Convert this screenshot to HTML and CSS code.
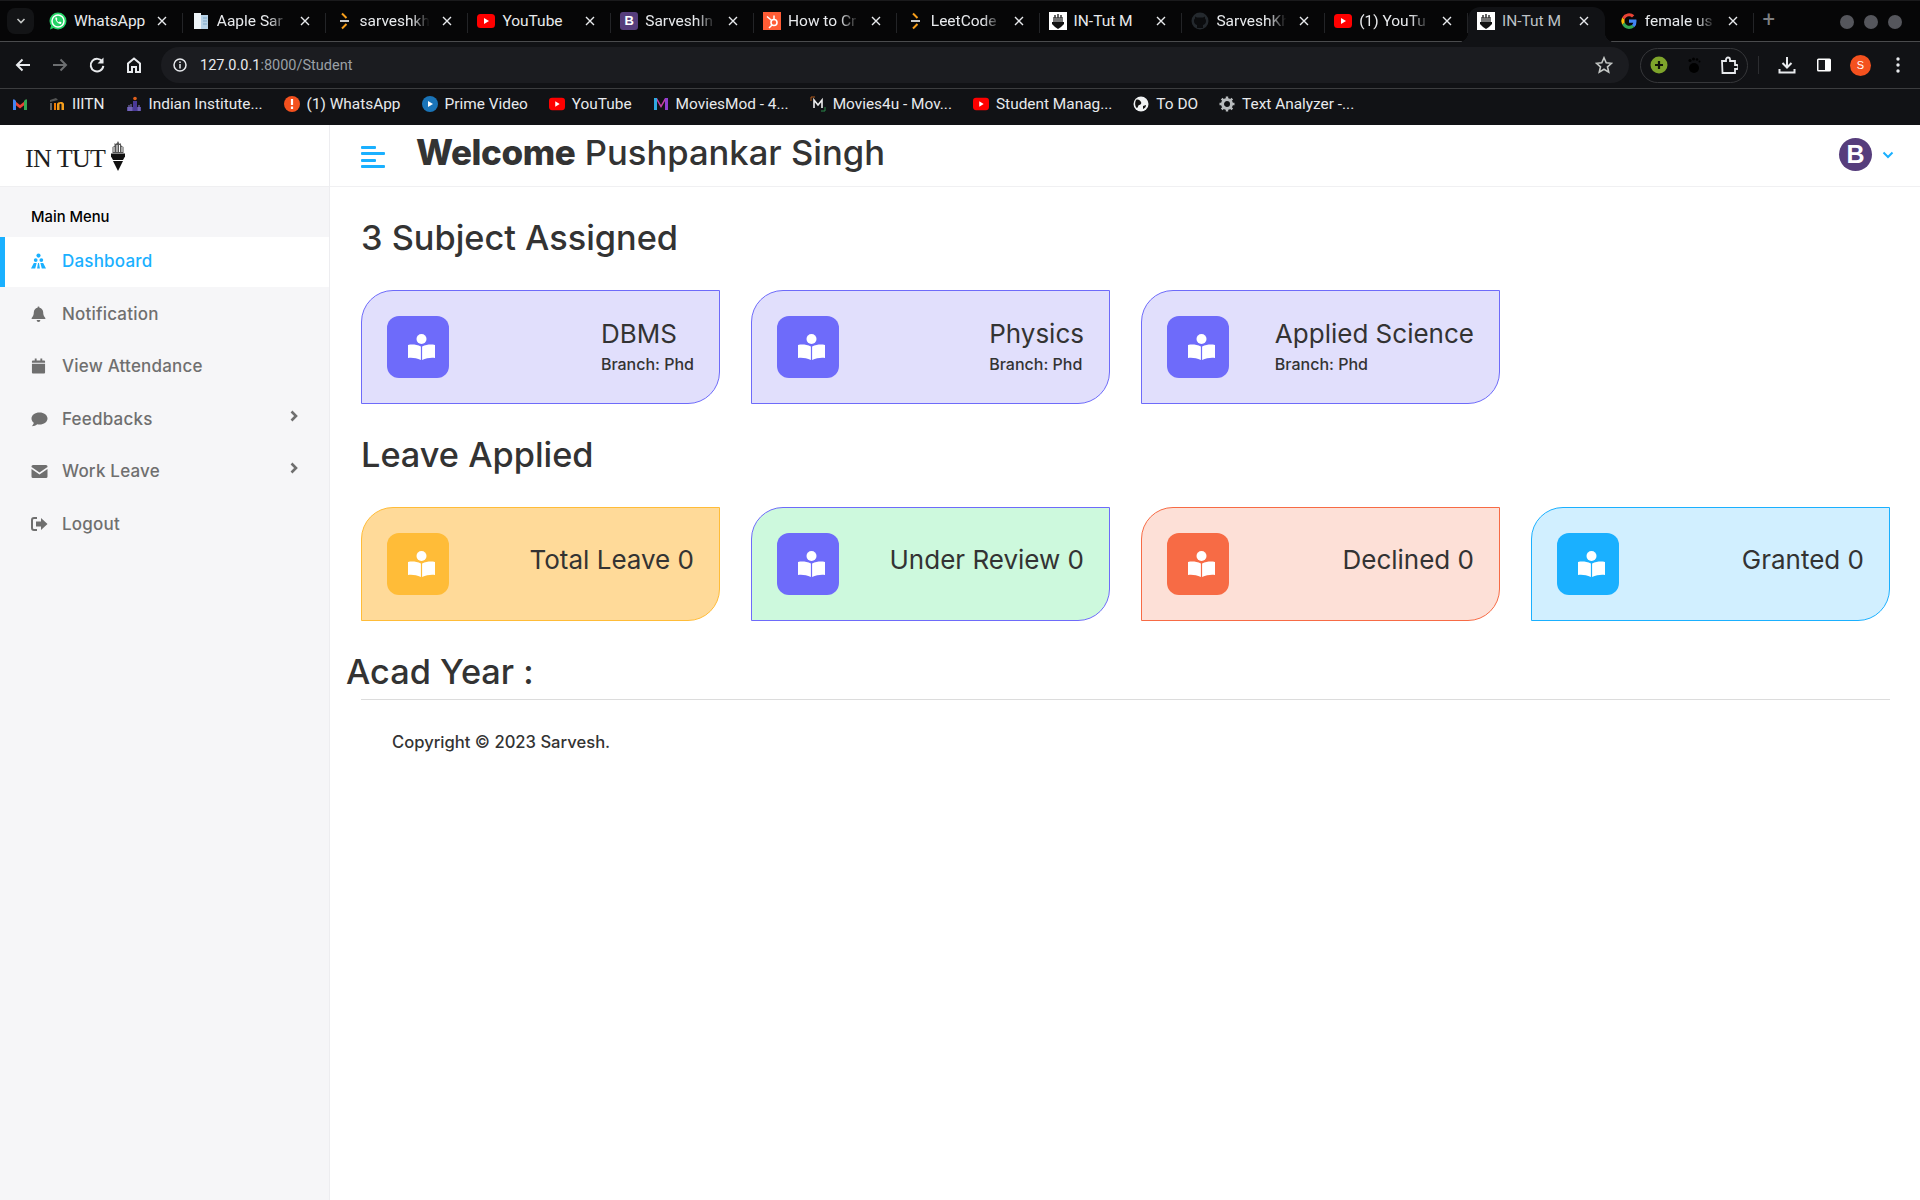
FILE: index.html
```html
<!DOCTYPE html>
<html lang="en">
<head>
<meta charset="utf-8">
<title>IN-Tut</title>
<link rel="stylesheet" href="styles.css">
</head>
<body>
<svg class="defs" width="0" height="0" aria-hidden="true">
  <symbol id="yt" viewBox="0 0 18 14"><rect width="18" height="14" rx="3.5" fill="#f00"/><path d="M7 4v6l5-3z" fill="#fff"/></symbol>
  <symbol id="lc" viewBox="0 0 18 18"><path d="M7 1.500 11.500 6M11.500 12 7 16.500" stroke="#f89f1b" stroke-width="2" fill="none"/><path d="M5 9h9" stroke="#c9c9c9" stroke-width="2"/></symbol>
  <symbol id="tut" viewBox="0 0 18 18"><rect width="18" height="18" fill="#fff"/><path d="M4 5h10v5H4z" fill="#777"/><path d="M3 10h12v2l-3 3-3 2-3-2-3-3z" fill="#111"/><path d="M6 3v3M9 2v4M12 3v3" stroke="#333" stroke-width="1.500"/></symbol>
  <symbol id="book" viewBox="0 0 27 26"><circle cx="13.500" cy="5" r="5" fill="#fff"/><path d="M0 11c4-1 8.500-.5 12.900 1.500V26C8.500 24 4 23.500 0 24z" fill="#fff"/><path d="M27 11c-4-1-8.500-.5-12.900 1.500V26c4.400-2 8.900-2.500 12.900-2z" fill="#fff"/></symbol>
  <symbol id="chev" viewBox="0 0 8 12"><path d="M1.500 1.500 6 6l-4.500 4.500" fill="none" stroke="currentColor" stroke-width="2.600"/></symbol>
  <symbol id="close" viewBox="0 0 10 10"><path d="M1 1l8 8M9 1 1 9" stroke="currentColor" stroke-width="1.400"/></symbol>
</svg>

<header class="browser">
  <div class="tabstrip">
    <button class="tab-search"><svg class="ic10" viewBox="0 0 10 10"><path d="M1.500 3 5 6.500 8.500 3" fill="none" stroke="#c4c7c5" stroke-width="1.600"/></svg></button>
    <div class="tabs">
      <div class="tab"><svg class="fav" viewBox="0 0 18 18"><circle cx="9" cy="9" r="8.500" fill="#25d366"/><path d="M1 17.500 2.500 12l3.500 3.500z" fill="#25d366"/><circle cx="9" cy="9" r="6" fill="none" stroke="#fff" stroke-width="1.500"/><path d="M6.500 5.500c-1 2 2.500 7 5.500 6.500l.5-1.800-1.800-.7-.8.800c-1-.4-1.800-1.300-2.200-2.300l.7-.8-.6-1.800z" fill="#fff"/></svg><span class="tab-title plain">WhatsApp</span><svg class="x"><use href="#close"/></svg></div>
      <div class="tab"><svg class="fav" viewBox="0 0 18 18"><path d="M2 1h7v16H2z" fill="#eef4f8"/><path d="M9 3h7v14H9z" fill="#b8d3e8"/><path d="M11 6h4M11 9h4M11 12h4" stroke="#7fa9c9"/></svg><span class="tab-title">Aaple Sar</span><svg class="x"><use href="#close"/></svg></div>
      <div class="tab"><svg class="fav"><use href="#lc"/></svg><span class="tab-title">sarveshkh</span><svg class="x"><use href="#close"/></svg></div>
      <div class="tab"><svg class="fav"><use href="#yt"/></svg><span class="tab-title plain">YouTube</span><svg class="x"><use href="#close"/></svg></div>
      <div class="tab"><span class="fav fav-b">B</span><span class="tab-title">SarveshIn</span><svg class="x"><use href="#close"/></svg></div>
      <div class="tab"><svg class="fav" viewBox="0 0 18 18"><rect width="18" height="18" fill="#ff5c35"/><circle cx="11" cy="10.500" r="3" fill="none" stroke="#fff" stroke-width="1.600"/><path d="M11 7V3.500M8.700 8.500 4 4.500M9 13l-3 3" stroke="#fff" stroke-width="1.500"/></svg><span class="tab-title">How to Cr</span><svg class="x"><use href="#close"/></svg></div>
      <div class="tab"><svg class="fav"><use href="#lc"/></svg><span class="tab-title">LeetCode</span><svg class="x"><use href="#close"/></svg></div>
      <div class="tab"><svg class="fav"><use href="#tut"/></svg><span class="tab-title plain">IN-Tut M</span><svg class="x"><use href="#close"/></svg></div>
      <div class="tab"><svg class="fav" viewBox="0 0 18 18"><circle cx="9" cy="9" r="8.500" fill="#24292e"/><path d="M6 16v-3c-2-.5-3-2-3-4 0-1 .4-2 1-2.500V4.500l2 1h6l2-1v2c.6.500 1 1.500 1 2.500 0 2-1 3.500-3 4v3z" fill="#0b0c0e"/></svg><span class="tab-title">SarveshKh</span><svg class="x"><use href="#close"/></svg></div>
      <div class="tab"><svg class="fav"><use href="#yt"/></svg><span class="tab-title">(1) YouTu</span><svg class="x"><use href="#close"/></svg></div>
      <div class="tab tab-active"><svg class="fav"><use href="#tut"/></svg><span class="tab-title plain">IN-Tut M</span><svg class="x"><use href="#close"/></svg></div>
      <div class="tab"><svg class="fav" viewBox="0 0 18 18"><path d="M16.500 9.200c0-.6 0-1.100-.2-1.700H9v3.300h4.300a3.700 3.700 0 0 1-1.600 2.400l2.500 2a7.600 7.600 0 0 0 2.300-6z" fill="#4285f4"/><path d="M9 17c2.100 0 3.900-.7 5.200-1.900l-2.500-2a4.700 4.700 0 0 1-7-2.500l-2.600 2A8 8 0 0 0 9 17z" fill="#34a853"/><path d="M4.700 10.600a4.800 4.800 0 0 1 0-3.100l-2.600-2a8 8 0 0 0 0 7.100z" fill="#fbbc05"/><path d="M9 4.200c1.200 0 2.200.4 3 1.200l2.300-2.200A8 8 0 0 0 2.100 5.500l2.600 2A4.800 4.800 0 0 1 9 4.200z" fill="#ea4335"/></svg><span class="tab-title">female us</span><svg class="x"><use href="#close"/></svg></div>
    </div>
    <span class="tab-plus">+</span>
    <div class="win-dots"><i></i><i></i><i></i></div>
  </div>

  <div class="toolbar">
    <button class="tb"><svg class="ic18" viewBox="0 0 18 18"><path d="M16 9H3M8.500 3.500 3 9l5.500 5.500" fill="none" stroke="#e8eaed" stroke-width="2"/></svg></button>
    <button class="tb"><svg class="ic18" viewBox="0 0 18 18"><path d="M2 9h13M9.500 3.500 15 9l-5.500 5.500" fill="none" stroke="#6c6e70" stroke-width="2"/></svg></button>
    <button class="tb"><svg class="ic18" viewBox="0 0 18 18"><path d="M14.500 6A6.300 6.300 0 1 0 15.300 9.800" fill="none" stroke="#e8eaed" stroke-width="2"/><path d="M15.500 1.500v6h-6z" fill="#e8eaed"/></svg></button>
    <button class="tb"><svg class="ic18" viewBox="0 0 18 18"><path d="M3 16V7.500L9 2.500l6 5V16h-4v-5H7v5z" fill="none" stroke="#e8eaed" stroke-width="2"/></svg></button>
    <div class="omnibox">
      <span class="omni-info"><svg class="ic14" viewBox="0 0 14 14"><circle cx="7" cy="7" r="6" fill="none" stroke="#e8eaed" stroke-width="1.500"/><path d="M7 6v4.500M7 3.500v1.500" stroke="#e8eaed" stroke-width="1.500"/></svg></span>
      <span class="url"><b>127.0.0.1</b>:8000/Student</span>
      <svg class="star" viewBox="0 0 18 18"><path d="M9 1.800 11.200 6.800l5.300.5-4 3.500 1.200 5.300L9 13.300l-4.700 2.800 1.200-5.300-4-3.500 5.300-.5z" fill="none" stroke="#c4c7c5" stroke-width="1.600"/></svg>
    </div>
    <div class="ext-pill">
      <span class="tb-s"><svg class="ic18" viewBox="0 0 18 18"><circle cx="9" cy="9" r="8.500" fill="#7ea42b"/><path d="M9 5v8M5 9h8" stroke="#10120a" stroke-width="2.200"/></svg></span>
      <span class="tb-s"><svg class="ic18" viewBox="0 0 18 18"><ellipse cx="9" cy="12" rx="5" ry="5" fill="#000"/><circle cx="5" cy="4.500" r="1.600" fill="#000"/><circle cx="8.500" cy="3" r="1.500" fill="#000"/><circle cx="12" cy="3.500" r="1.300" fill="#000"/><circle cx="14.500" cy="5.500" r="1" fill="#000"/></svg></span>
      <span class="tb-s"><svg class="ic18" viewBox="0 0 18 18"><path d="M2 5h4V3.500a2 2 0 0 1 4 0V5h5v4h1.500a2 2 0 0 1 0 4H15v4H2.500z" fill="none" stroke="#e8eaed" stroke-width="1.800"/></svg></span>
    </div>
    <span class="tb-divider"></span>
    <button class="tb"><svg class="ic18" viewBox="0 0 18 18"><path d="M9 1v10M4.500 7 9 11.500 13.500 7M1.500 13v3.500h15V13" fill="none" stroke="#e8eaed" stroke-width="2"/></svg></button>
    <button class="tb"><svg class="ic18" viewBox="0 0 18 18"><rect x="2" y="2.500" width="14" height="13" rx="1.500" fill="#fff"/><rect x="3.500" y="4" width="6.500" height="10" fill="#16171a"/></svg></button>
    <button class="tb"><span class="profile">S</span></button>
    <button class="tb"><svg class="ic18" viewBox="0 0 18 18"><circle cx="9" cy="3" r="1.700" fill="#e8eaed"/><circle cx="9" cy="9" r="1.700" fill="#e8eaed"/><circle cx="9" cy="15" r="1.700" fill="#e8eaed"/></svg></button>
  </div>

  <nav class="bookmarks">
    <a class="bm"><svg class="bm-ic" viewBox="0 0 16 16"><path d="M1 3.500 8 9l7-5.500V7L8 12.500 1 7z" fill="#ea4335"/><path d="M1 3.500h1.500L4 5v9H1z" fill="#4285f4"/><path d="M15 3.500h-1.500L12 5v9h3z" fill="#34a853"/></svg></a>
    <a class="bm"><svg class="bm-ic" viewBox="0 0 16 16"><path d="M1 4l6-2 2 2-8 2z" fill="#555"/><path d="M1 7h2v7H1z" fill="#666"/><path d="M5 7h2v7H5z" fill="#f57c00"/><path d="M8 14V8c0-2.500 7-3 7 0v6h-2.500V8.500c0-1-2-1-2 0V14z" fill="#f59e1c"/></svg>IIITN</a>
    <a class="bm"><svg class="bm-ic" viewBox="0 0 16 16"><circle cx="9" cy="2.500" r="1.800" fill="#e0601c"/><path d="M1 15v-4h14v4z" fill="#5b4ea0"/><path d="M7 5h4v10H7z" fill="#4a3a98"/><path d="M3 9v6M5 8v7M13 9v6" stroke="#8a7ad0"/></svg>Indian Institute...</a>
    <a class="bm"><svg class="bm-ic" viewBox="0 0 16 16"><circle cx="8" cy="8" r="8" fill="#f4511e"/><path d="M8 3v6M8 10.500V13" stroke="#fff" stroke-width="2.200"/></svg>(1) WhatsApp</a>
    <a class="bm"><svg class="bm-ic" viewBox="0 0 16 16"><circle cx="8" cy="8" r="8" fill="#1a74b8"/><path d="M6 5v6l5-3z" fill="#fff"/></svg>Prime Video</a>
    <a class="bm"><svg class="bm-ic"><use href="#yt"/></svg>YouTube</a>
    <a class="bm"><svg class="bm-ic" viewBox="0 0 16 16"><path d="M1 14V2h3v12z" fill="#2fa8e0"/><path d="M4 2l4 7 4-7v3l-4 7-4-7z" fill="#c53ea8"/><path d="M12 14V2h3v12z" fill="#8f3fd0"/></svg>MoviesMod - 4...</a>
    <a class="bm"><svg class="bm-ic" viewBox="0 0 16 16"><path d="M1 5V1h4" stroke="#b25a1c" fill="none"/><path d="M15 11v4h-4" stroke="#2a8a4a" fill="none"/><path d="M4 12V4l4 5 4-5v8" stroke="#eee" stroke-width="1.600" fill="none"/></svg>Movies4u - Mov...</a>
    <a class="bm"><svg class="bm-ic"><use href="#yt"/></svg>Student Manag...</a>
    <a class="bm"><svg class="bm-ic" viewBox="0 0 16 16"><circle cx="8" cy="8" r="7.500" fill="#f1f3f4"/><path d="M3 4c2-1 4 0 5 2s-1 3-2 3-1 3-2 3-3-4-1-8zM10 10l3-1c0 2-1 3-3 4z" fill="#111"/></svg>To DO</a>
    <a class="bm"><svg class="bm-ic" viewBox="0 0 16 16"><circle cx="8" cy="8" r="4.500" fill="none" stroke="#b9bcbe" stroke-width="3"/><path d="M8 .5v3M8 12.500v3M.5 8h3M12.500 8h3M2.700 2.700l2 2M11.300 11.300l2 2M13.300 2.700l-2 2M4.700 11.300l-2 2" stroke="#b9bcbe" stroke-width="2.400"/></svg>Text Analyzer -...</a>
  </nav>
</header>

<div class="app">
  <aside class="sidebar">
    <div class="brand">
      <span class="brand-text">IN TUT</span>
      <svg class="brand-mark" viewBox="0 0 16 32"><path d="M2.500 13V7l2-1V3l1 1 1-1v1l1.500-3 1.500 3 1-1 1 3 2 1v6z" fill="#555"/><path d="M4 7v5M7 5v7M9.500 5v7M12 7v5" stroke="#fff"/><path d="M1 13.500h14v3L13 20H3l-2-3.500z" fill="#111"/><path d="M3 21h10l-5 10z" fill="#111"/></svg>
    </div>
    <div class="menu-title">Main Menu</div>
    <a class="nav-item nav-active"><svg class="nav-ic" viewBox="0 0 16 16"><circle cx="8" cy="2.200" r="2.200"/><circle cx="5" cy="7" r="2"/><circle cx="11" cy="7" r="2"/><path d="M0 16l3-6h3L4.500 16zM16 16l-3-6h-3l1.500 6zM6.500 16l1-6h1l1 6z"/></svg>Dashboard</a>
    <a class="nav-item"><svg class="nav-ic" viewBox="0 0 16 16"><path d="M8 0a1 1 0 0 1 1 1.200c2.500.5 4 2.500 4 5 0 3 .8 4.500 2.300 6v1H.7v-1C2.200 10.700 3 9.200 3 6.200c0-2.500 1.500-4.500 4-5A1 1 0 0 1 8 0zM6 14.500h4a2 2 0 0 1-4 0z"/></svg>Notification</a>
    <a class="nav-item"><svg class="nav-ic" viewBox="0 0 16 16"><path d="M1 5.500h14V15a1 1 0 0 1-1 1H2a1 1 0 0 1-1-1zM2 2h2V0h2v2h4V0h2v2h2a1 1 0 0 1 1 1v1.500H1V3a1 1 0 0 1 1-1z"/></svg>View Attendance</a>
    <a class="nav-item has-sub"><svg class="nav-ic wide" viewBox="0 0 17 16"><path d="M8.500 1.500c4.500 0 8 2.600 8 6s-3.500 6-8 6c-.8 0-1.500-.1-2.200-.2C5 14.500 3 15.300.8 15.300c1-1 1.800-2.300 2-3.500C1.300 10.700.5 9.200.5 7.500c0-3.400 3.500-6 8-6z"/></svg><span class="nav-label">Feedbacks</span><svg class="nav-chev"><use href="#chev"/></svg></a>
    <a class="nav-item has-sub"><svg class="nav-ic wide" viewBox="0 0 17 16"><path d="M.5 3.500A1.500 1.500 0 0 1 2 2h13a1.500 1.500 0 0 1 1.500 1.500v.6L8.500 9.500.5 4.100zM.5 6l8 5.400L16.500 6v7.500A1.500 1.500 0 0 1 15 15H2a1.500 1.500 0 0 1-1.500-1.500z"/></svg><span class="nav-label">Work Leave</span><svg class="nav-chev"><use href="#chev"/></svg></a>
    <a class="nav-item"><svg class="nav-ic wide" viewBox="0 0 17 16"><path d="M6 2H3a2 2 0 0 0-2 2v8a2 2 0 0 0 2 2h3" fill="none" stroke="currentColor" stroke-width="2"/><path d="M10 2l6.500 6L10 14v-3.500H5v-5h5z"/></svg>Logout</a>
  </aside>

  <div class="main">
    <div class="topbar">
      <div class="burger"><i class="short"></i><i></i><i class="short"></i><i></i></div>
      <h1 class="welcome"><strong>Welcome</strong> <span class="welcome-name">Pushpankar Singh</span></h1>
      <div class="user"><span class="avatar">B</span><svg class="user-chev" viewBox="0 0 12 8"><path d="M1.500 1.500 6 6l4.500-4.500" fill="none" stroke="#1ab0ff" stroke-width="2"/></svg></div>
    </div>
    <div class="content">
      <h2 class="section-title">3 Subject Assigned</h2>
      <div class="card-row">
        <div class="card violet"><span class="card-icon"><svg class="book"><use href="#book"/></svg></span><div class="card-text"><div class="card-name">DBMS</div><div class="card-sub">Branch: Phd</div></div></div>
        <div class="card violet"><span class="card-icon"><svg class="book"><use href="#book"/></svg></span><div class="card-text"><div class="card-name">Physics</div><div class="card-sub">Branch: Phd</div></div></div>
        <div class="card violet"><span class="card-icon"><svg class="book"><use href="#book"/></svg></span><div class="card-text"><div class="card-name">Applied Science</div><div class="card-sub">Branch: Phd</div></div></div>
      </div>
      <h2 class="section-title">Leave Applied</h2>
      <div class="card-row">
        <div class="card amber"><span class="card-icon"><svg class="book"><use href="#book"/></svg></span><div class="card-text"><div class="card-name solo">Total Leave 0</div></div></div>
        <div class="card mint"><span class="card-icon"><svg class="book"><use href="#book"/></svg></span><div class="card-text"><div class="card-name solo">Under Review 0</div></div></div>
        <div class="card coral"><span class="card-icon"><svg class="book"><use href="#book"/></svg></span><div class="card-text"><div class="card-name solo">Declined 0</div></div></div>
        <div class="card sky"><span class="card-icon"><svg class="book"><use href="#book"/></svg></span><div class="card-text"><div class="card-name solo">Granted 0</div></div></div>
      </div>
      <h2 class="section-title acad">Acad Year :</h2>
      <hr class="rule">
      <p class="copyright">Copyright © 2023 Sarvesh.</p>
    </div>
  </div>
</div>
</body>
</html>
```

FILE: styles.css
```css
* { box-sizing: border-box; }
html, body { height: 100%; }
body {
  margin: 0;
  height: 1200px;
  overflow: hidden;
  display: flex;
  flex-direction: column;
  background: #fff;
  font-family: Inter, "Open Sans", sans-serif;
  color: #333;
}
.defs { position: absolute; }
button { border: 0; background: none; padding: 0; }

/* browser chrome */
.browser { flex: 0 0 125px; background: #111215; font-family: Roboto, sans-serif; color: #e8eaed; }
.tabstrip { height: 42px; display: flex; background: #060607; border-top: 1px solid #1a1a1c; border-bottom: 1px solid #4a4b4d; position: relative; }
.tab-search { width: 27px; height: 26px; margin: 7px 0 0 7px; border-radius: 8px; background: #131416; display: flex; align-items: center; justify-content: center; flex: none; }
.ic10 { width: 10px; height: 10px; }
.tabs { display: flex; margin-left: 6px; height: 34px; margin-top: 6px; flex: none; }
.tab { width: 142.800px; height: 35px; padding: 0 16px 7px 9px; display: flex; align-items: center; gap: 7px; font-size: 15.500px; position: relative; flex: none; }
.tab::after { content: ""; position: absolute; right: 0; top: 6px; height: 20px; width: 1px; background: #232427; }
.tab-active { background: #111215; border-radius: 12px 12px 0 0; z-index: 1; color: #bdc1c6; width: 137px; margin-right: 5.800px; }
.tab-active::before, .tab-active::after { content: ""; position: absolute; bottom: 0; top: auto; width: 10px; height: 10px; }
.tab-active::before { left: -10px; background: radial-gradient(circle at 0 0, transparent 10px, #111215 10.500px); }
.tab-active::after { right: -10px; background: radial-gradient(circle at 100% 0, transparent 10px, #111215 10.500px); }
.fav { width: 18px; height: 18px; flex: none; }
.fav-b { background: #563d7c; color: #fff; border-radius: 3px; font: 700 13px/18px "Liberation Sans", sans-serif; text-align: center; }
.tab-title { flex: 1; min-width: 0; margin-right: 4px; white-space: nowrap; -webkit-mask-image: linear-gradient(90deg, #000 72%, transparent 98%); mask-image: linear-gradient(90deg, #000 72%, transparent 98%); }
.tab-title.plain { -webkit-mask-image: none; mask-image: none; }
.x { width: 10px; height: 10px; flex: none; color: #e8eaed; }
.tab-plus { margin: 4px 0 0 9px; font-size: 22px; line-height: 30px; color: #7d7f82; flex: none; }
.win-dots { margin-left: auto; padding: 14px 18px 0 0; display: flex; gap: 10px; flex: none; }
.win-dots i { width: 14px; height: 14px; border-radius: 50%; background: #55565c; }

.toolbar { height: 47px; display: flex; align-items: center; padding: 0 4px; border-bottom: 1px solid #3c3d3f; background: #111215; }
.tb { width: 37px; height: 36px; display: flex; align-items: center; justify-content: center; flex: none; }
.ic18 { width: 18px; height: 18px; }
.ic14 { width: 14px; height: 14px; }
.omnibox { flex: 1; height: 36px; margin: 0 11px 0 9px; padding: 0 16px 0 10px; border-radius: 18px; background: #1b1c20; display: flex; align-items: center; min-width: 0; }
.omni-info { width: 18px; display: flex; justify-content: center; flex: none; }
.url { margin-left: 11px; flex: 1; font-size: 14.500px; color: #9aa0a6; }
.url b { font-weight: 400; color: #e8eaed; }
.star { width: 18px; height: 18px; flex: none; }
.ext-pill { width: 108px; height: 35px; border: 1px solid #36373a; border-radius: 18px; display: flex; align-items: center; flex: none; }
.tb-s { flex: 1; display: flex; justify-content: center; }
.tb-divider { width: 1px; height: 18px; margin: 0 9px 0 10px; background: #2c2d30; flex: none; }
.profile { width: 21px; height: 21px; border-radius: 50%; background: #f4511e; color: #fff; font-size: 11px; line-height: 21px; text-align: center; }

.bookmarks { height: 36px; display: flex; align-items: center; padding: 0 0 6px 12px; gap: 21px; }
.bm { display: flex; align-items: center; gap: 7px; font-size: 15.400px; white-space: nowrap; color: #e8eaed; }
.bm-ic { width: 16px; height: 16px; flex: none; }

/* app */
.app { flex: 1; display: flex; min-height: 0; }
.sidebar { flex: 0 0 330px; background: #f6f6f8; border-right: 1px solid #ededf0; font-size: 16px; }
.brand { height: 62px; background: #fff; border-bottom: 1px solid #efeff1; padding-left: 25px; display: flex; align-items: center; gap: 5px; }
.brand-text { font: 400 26px/1 "Liberation Serif", serif; color: #1d1d1d; letter-spacing: -.6px; margin-top: 6px; }
.brand-mark { width: 16px; height: 32px; }
.menu-title { height: 50px; padding: 20px 0 0 31px; font-size: 14.800px; line-height: 20px; font-weight: 500; color: #000; }
.nav-item { height: 50px; padding: 0 0 2px 31px; margin-bottom: 2.600px; display: flex; align-items: center; font-weight: 500; font-size: 17px; letter-spacing: .2px; color: #6f6f6f; }
.nav-active { background: #fff; border-left: 5px solid #1ab0ff; padding-left: 26px; color: #1ab0ff; }
.nav-ic { width: 15px; height: 16px; margin-right: 16px; fill: currentColor; flex: none; }
.nav-ic.wide { width: 17px; margin-right: 14px; }
.nav-label { flex: 1; }
.nav-chev { width: 8px; height: 12px; margin: -6px 31px 0 0; flex: none; color: #6f6f6f; }
.main { flex: 1; min-width: 0; display: flex; flex-direction: column; }
.topbar { height: 62px; border-bottom: 1px solid #f0f0f2; padding: 0 26px 0 31px; display: flex; align-items: center; }
.burger { width: 24px; display: flex; flex-direction: column; gap: 3.400px; margin-top: 3px; flex: none; }
.burger i { height: 3px; background: #1ab0ff; border-radius: 1px; }
.burger i.short { width: 15px; }
.welcome { margin: -8px 0 0 31px; font-size: 35px; font-weight: 500; color: #333; white-space: nowrap; }
.welcome strong { font-weight: 800; letter-spacing: -.4px; }
.welcome-name { font-size: 34.600px; }
.user { margin: -2px 0 0 auto; display: flex; align-items: center; gap: 10px; }
.avatar { width: 33px; height: 33px; border-radius: 50%; background: #563d7c; color: #fff; font: 700 25px/33px "Liberation Sans", sans-serif; text-align: center; }
.user-chev { width: 12px; height: 8px; }
.content { padding: 25px 30px 0 31px; }
.section-title { margin: 0 0 28px; height: 50px; font-size: 34.300px; line-height: 51px; font-weight: 500; color: #333; }
.card-row { display: grid; grid-template-columns: repeat(4, 359px); gap: 31px; margin-bottom: 25px; }
.card { height: 114px; padding: 25px; border: 1px solid; border-radius: 32px 0 32px 0; display: flex; justify-content: space-between; }
.card-icon { width: 62px; height: 62px; border-radius: 12px; display: flex; align-items: center; justify-content: center; padding-left: 7px; flex: none; }
.book { width: 27px; height: 26px; }
.card-text { display: flex; flex-direction: column; }
.card-name { font-size: 26px; line-height: 36px; color: #333; white-space: nowrap; }
.card-name.solo { margin-top: 9px; }
.card-sub { font-size: 16px; font-weight: 500; line-height: 24px; color: #333; }
.violet { background: #e1dffc; border-color: #6e6bfa; }
.violet .card-icon, .mint .card-icon { background: #6e6bfa; }
.amber { background: #ffda99; border-color: #ffbc38; }
.amber .card-icon { background: #ffbc38; }
.mint { background: #cdf9dd; border-color: #6e6bfa; }
.coral { background: #fde0d7; border-color: #f76b45; }
.coral .card-icon { background: #f76b45; }
.sky { background: #d1efff; border-color: #1ab0ff; }
.sky .card-icon { background: #1ab0ff; }
.acad { margin: 0 0 3px -15px; }
.rule { margin: 0; border: 0; border-top: 1px solid #dcdcdc; }
.copyright { margin: 31px 0 0 31px; font-size: 16.600px; line-height: 22px; font-weight: 500; color: #333; }
```
